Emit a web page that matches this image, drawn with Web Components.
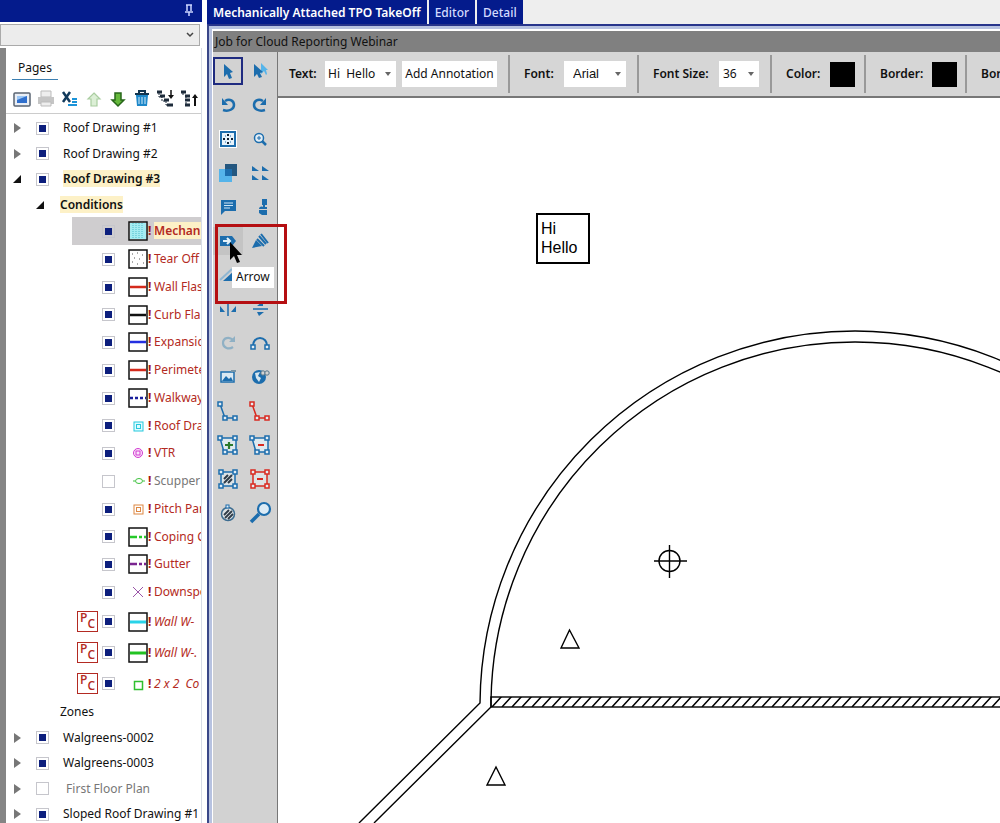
<!DOCTYPE html>
<html lang="en">
<head>
<meta charset="utf-8">
<title>Roof TakeOff</title>
<style>
  html, body { height: 100%; }
  body { margin: 0; overflow: hidden; background: #fff; font: 12px/18px "Noto Sans", "Open Sans", sans-serif; color: #111; }
</style>
</head>
<body>
<takeoff-app></takeoff-app>
<script>
const B = '#1c6dad', L = '#55b4ea', R = '#d92a20';
const node = (x, y, c) => `<rect x="${x}" y="${y}" width="4" height="4" fill="#e4edf4" stroke="${c}" stroke-width="1.5"/>`;
const poly = (c, inner) => `<path d="M5 6H21V20H9Z" fill="#dfe9ee" stroke="${c}" stroke-width="1.5"/>${node(3,4,c)}${node(18,4,c)}${node(18,18,c)}${node(8,18,c)}${inner}`;
const square = (c, inner) => `<rect x="6" y="6" width="14" height="14" fill="#dde3e6" stroke="${c}" stroke-width="1.5"/>${node(4,4,c)}${node(18,4,c)}${node(18,18,c)}${node(4,18,c)}${inner}`;
const path2 = c => `<path d="M5 6L10 20H20" fill="none" stroke="${c}" stroke-width="1.5"/>${node(3,4,c)}${node(8,18,c)}${node(18,18,c)}`;
const undo = `<path d="M10 9C15 6 19 9 19 13S14 20 8 18" fill="none" stroke="${B}" stroke-width="2.5"/><path d="M7 6V13H13Z" fill="${B}"/>`;
const boxed = inner => `<rect x="4" y="4" width="18" height="18" fill="#fff" stroke="#111" stroke-width="1.5"/>${inner}`;
const ICONS = {
  pin: `<path d="M10 7H16M11 7V13M15 7V13M9 14H17M13 14V18" fill="none" stroke="#cdd6ff" stroke-width="1.5"/>`,
  view: `<rect x="5" y="7" width="16" height="13" rx="1" fill="#e9eef5" stroke="#5a6472" stroke-width="1.5"/><rect x="8" y="10" width="10" height="7" fill="#2f6fcd"/><path d="M8 10H18L8 14Z" fill="#9cc7f5"/>`,
  print: `<path d="M8 5H18V11H8Z" fill="#eee" stroke="#bbb"/><path d="M5 11H21V18H5Z" fill="#c5c5c5"/><path d="M8 16H18V20H8Z" fill="#eee" stroke="#bbb"/>`,
  excel: `<path d="M6 6L13 16M13 6L6 16" stroke="#123a5c" stroke-width="2.5"/><path d="M15 13H20M15 16H20M11 19H20" stroke="#1b93d8" stroke-width="2"/>`,
  up: `<path d="M13 7L19 13H16V20H10V13H7Z" fill="#dcefd6" stroke="#a9cda0" stroke-width="1.2"/>`,
  down: `<path d="M13 20L19 14H16V7H10V14H7Z" fill="#66b93c" stroke="#27661a" stroke-width="1.5"/>`,
  trash: `<path d="M7 9H19L18 20H8Z" fill="#1e88c9"/><path d="M10 11V18M13 11V18M16 11V18" stroke="#d5ecfa"/><path d="M6 8H20M10 7V5H16V7" fill="none" stroke="#12354f" stroke-width="2"/>`,
  expand: `<path d="M4 6H9M7 10H12M11 14H16M14 19H20" stroke="#1d2b3a" stroke-width="3"/><path d="M6 7V11H9V15H13V19H17" fill="none" stroke="#1d2b3a" stroke-dasharray="2 1"/><path d="M18 4V11" stroke="#111" stroke-width="1.5"/><path d="M15 9H21L18 13Z" fill="#111"/>`,
  collapse: `<path d="M4 6H9M8 10H13M8 14H13M8 19H13" stroke="#1d2b3a" stroke-width="3"/><path d="M6 7V10M9 10V19" fill="none" stroke="#1d2b3a" stroke-dasharray="2 1"/><path d="M18 11V20" stroke="#111" stroke-width="2"/><path d="M15 12H21L18 8Z" fill="#111"/>`,
  cursor: `<path d="M9 6V19L12 16L14 21L17 20L15 15L18 14Z" fill="${B}"/>`,
  cursors: `<path d="M14 5V16L17 13L19 17L20 16L19 12H21Z" fill="${L}"/><path d="M7 6V19L10 16L12 20L15 19L13 15L16 14Z" fill="${B}"/>`,
  undo, redo: `<g transform="matrix(-1 0 0 1 26 0)">${undo}</g>`,
  grid: `<rect x="4" y="4" width="18" height="18" fill="#fff"/><rect x="6" y="6" width="14" height="14" fill="#e7f3fb" stroke="${B}" stroke-width="2"/><path d="M13 8V10M13 12V14M13 16V18M8 13H10M16 13H18" stroke="#123" stroke-width="2"/><path d="M10 10H11M15 10H16M10 16H11M15 16H16" stroke="${B}"/>`,
  zoom: `<circle cx="12" cy="12" r="4.5" fill="#e2edf5" stroke="${B}" stroke-width="1.5"/><path d="M15 15L19 19" stroke="${B}" stroke-width="2.5"/><path d="M10 12H14M12 10V14" stroke="${B}"/>`,
  layers: `<rect x="4" y="9" width="13" height="13" fill="${L}"/><rect x="10" y="4" width="12" height="12" fill="#24577f"/><rect x="10" y="9" width="7" height="7" fill="${B}"/>`,
  corners: ['5 6','15 6','5 15','15 15'].map(p => `<path d="M${p}L${+p.split(' ')[0] + 7} ${+p.split(' ')[1] + 5}H${p.split(' ')[0]}Z" fill="${B}"/>`).join(''),
  comment: `<path d="M6 6H21V17H10L6 21Z" fill="${B}"/><path d="M9 9H18M9 11.500H18M9 14H15" stroke="#cfe6f5"/>`,
  stamp: `<path d="M15 5H20V11H18V13H20V15H12C12 13 14 12 16 13V11H15Z" fill="${B}"/><path d="M12 16H20V21H15L12 19Z" fill="${B}"/>`,
  tag: `<path d="M5 8H17L21 13L17 18H5Z" fill="${B}"/><path d="M8 13H14M12 10L15 13L12 16" fill="none" stroke="#e5f2fa" stroke-width="2"/>`,
  marker: `<path d="M5 20L9 12L15 18Z" fill="${B}"/><path d="M10 11L17 18M12 8L19 16M14 6L21 15" stroke="${B}" stroke-width="2"/>`,
  slope: `<path d="M5 18L17 7" stroke="#8fb6d2" stroke-width="2"/><path d="M8 19L20 8V19Z" fill="${B}"/>`,
  flipx: `<path d="M5 10L10 16H5ZM21 10L16 16H21Z" fill="${B}"/><path d="M13 7V20" stroke="${B}" stroke-width="1.5"/>`,
  flipy: `<path d="M16 5V10H10ZM10 16H17L12 20Z" fill="${B}"/><path d="M6 13H21" stroke="${B}" stroke-width="1.5"/>`,
  again: `<path d="M18 10C14 6 8 8 8 13S14 20 18 17" fill="none" stroke="#8fb0c4" stroke-width="2.2"/><path d="M20 6V12H14Z" fill="#8fb0c4"/>`,
  arc: `<path d="M6 17C5 5 21 5 20 17" fill="none" stroke="${B}" stroke-width="2"/>${node(4,15,B)}${node(18,15,B)}`,
  image: `<rect x="6" y="8" width="13" height="10" fill="#dbe9f2" stroke="${B}" stroke-width="1.5"/><path d="M7 17L11 12L14 15L16 13L18 17Z" fill="${B}"/><path d="M16 7H21" stroke="#7795a8" stroke-width="2"/>`,
  globe: `<circle cx="12" cy="13" r="7" fill="${B}"/><path d="M8 9L13 8L11 12L14 14L12 18L9 14Z" fill="#d6e6ef"/><circle cx="16" cy="9" r="2.2" fill="#d2d2d2" stroke="#55758a"/><circle cx="20" cy="9" r="2.2" fill="#d2d2d2" stroke="#55758a"/>`,
  path: path2(B), pathdel: path2(R),
  polyadd: poly(B, `<path d="M14 10V17M10 13H18" stroke="#2b7a2b" stroke-width="2.2"/>`),
  polysub: poly(B, `<path d="M11 13H17" stroke="${R}" stroke-width="2"/>`),
  hatch: square(B, `<path d="M9 13L13 9M9 17L17 9M13 17L17 13" stroke="#2f3c48" stroke-width="2"/>`),
  cut: square(R, `<path d="M10 13H16" stroke="${R}" stroke-width="2"/>`),
  hatchround: `<circle cx="13" cy="14" r="6.500" fill="#dde3e6" stroke="#3c6c90" stroke-width="1.5"/><path d="M9 15L14 10M10 18L17 11M13 19L18 14" stroke="#2f3c48" stroke-width="1.8"/><rect x="11" y="5" width="3" height="3" fill="#e4edf4" stroke="${B}"/>`,
  find: `<circle cx="17" cy="9" r="6" fill="#dcebf5" stroke="${B}" stroke-width="2.200"/><path d="M12 14L4 22" stroke="${B}" stroke-width="3.500"/>`,
  'fill-cyan': boxed(`<rect x="5" y="5" width="16" height="16" fill="#a5ecf2"/><path d="M8 5V21M11 5V21M14 5V21M17 5V21" stroke="#4cbccb" stroke-dasharray="1 1"/>`),
  dots: boxed(`<path d="M7 8H8M12 7H13M17 9H18M9 12H10M14 13H15M7 16H8M12 18H13M18 17H19" stroke="#555"/>`),
  red: boxed(`<path d="M5 13H21" stroke="#d42a1c" stroke-width="2.500"/>`),
  black: boxed(`<path d="M5 13H21" stroke="#111" stroke-width="2.500"/>`),
  blue: boxed(`<path d="M5 13H21" stroke="#2430e0" stroke-width="2.500"/>`),
  walk: boxed(`<path d="M5 13H21" stroke="#1a1f9c" stroke-width="2.500" stroke-dasharray="3 2"/>`),
  coping: boxed(`<path d="M5 13H21" stroke="#26c92a" stroke-width="2.500" stroke-dasharray="7 2 3 2"/>`),
  gutter: boxed(`<path d="M5 13H21" stroke="#7a2590" stroke-width="2.500" stroke-dasharray="7 2 3 2"/>`),
  cyan: boxed(`<path d="M5 13H21" stroke="#29d3e8" stroke-width="3"/>`),
  green: boxed(`<path d="M5 13H21" stroke="#22c322" stroke-width="3"/>`),
  drain: `<rect x="9" y="9" width="9" height="9" fill="#e0fbff" stroke="#25c9dd"/><rect x="11.500" y="11.500" width="4" height="4" fill="none" stroke="#25c9dd"/>`,
  vtr: `<circle cx="13" cy="13" r="4.500" fill="#fbe4fb" stroke="#d13ad1"/><rect x="11" y="11" width="4" height="4" fill="none" stroke="#d13ad1"/>`,
  scupper: `<ellipse cx="14" cy="13" rx="3.500" ry="2.500" fill="none" stroke="#3ec13e"/><path d="M8 13H10M18 13H20" stroke="#3ec13e"/>`,
  pan: `<rect x="9" y="9" width="9" height="9" fill="#fff" stroke="#dd8742"/><rect x="11.500" y="11.500" width="4" height="4" fill="none" stroke="#dd8742"/>`,
  cross: `<path d="M8 8L18 18M18 8L8 18" stroke="#9a55a8"/>`,
  box: `<rect x="9.500" y="10.500" width="8" height="8" fill="#fff" stroke="#2fc02f" stroke-width="1.500"/>`
};

function define(name, html, setup) {
  const template = document.createElement('template');
  template.innerHTML = html;
  customElements.define(name, class extends HTMLElement {
    connectedCallback() {
      if (this.shadowRoot) return;
      const root = this.attachShadow({ mode: 'open' });
      root.append(template.content.cloneNode(true));
      if (setup) setup(this, root);
    }
  });
}

define('ui-icon', `<style>:host{display:block;flex:none;width:26px;height:26px}svg{display:block}</style>
<svg width="26" height="26" viewBox="0 0 26 26" aria-hidden="true"></svg>`,
(host, root) => { root.querySelector('svg').innerHTML = ICONS[host.getAttribute('name')] || ''; });

define('tree-row', `<style>
:host{display:flex;align-items:center;height:25px;white-space:nowrap;overflow:hidden;padding-left:7px}
:host(:nth-of-type(odd)){height:26px}
:host([level="2"]){padding-left:30px}
:host([level="3"]),:host([level="3"]:nth-of-type(odd)){height:28px;padding-left:30px;margin-left:66px;color:#b32a22}
:host([level="3"]:nth-of-type(4n)){height:27px}
:host([pc][level="3"]),:host([pc][level="3"]:nth-of-type(odd)){height:31px;padding-left:5px;font-style:italic}
:host([selected]){background:#cfcdcf}
.exp{all:unset;display:flex;justify-content:center;width:8px;height:10px;margin-right:15px;flex:none}
:host([level="2"]) .exp{margin-right:16px}
.exp svg{width:8px;height:10px}
input{appearance:none;box-sizing:border-box;width:13px;height:13px;margin:0;padding:2px;border:1px solid #c6c6cc;background:#fff;flex:none}
input:checked{background:#0d1f7d content-box}
label{display:flex;align-items:center;flex:none}
.name{margin-left:14px}
:host([level="2"]) .name{margin-left:0}
:host([level="3"]) .name{margin-left:1px}
ui-icon{margin:0 -3px 0 10px}
.bang{font-weight:700;font-style:normal;width:5px;color:#a31515}
:host([strong]) .name{font-weight:600}
:host([strong]) .name span{background:#fdf1c7}
:host([off]) .name{color:#777}
.pc{box-sizing:border-box;display:flex;flex:none;justify-content:center;width:21px;height:21px;margin-right:4px;border:1px solid #b32a22;font:600 12px/12px "Open Sans",sans-serif;color:#b32a22}
.pc b{font-weight:600}
.pc b+b{padding-top:6px}
</style>
<button class="exp" aria-label="Toggle"><svg viewBox="0 0 8 10"></svg></button>
<span class="pc"><b>P</b><b>C</b></span>
<label><input type="checkbox"><span class="bang">!</span><span class="name"><span><slot></slot></span></span></label>`,
(host, root) => {
  const $ = s => root.querySelector(s), level = host.getAttribute('level');
  const exp = host.getAttribute('exp');
  if (exp) $('.exp svg').innerHTML = exp === 'open' ? '<path d="M8 1V9H0Z" fill="#111"/>' : '<path d="M1 0L8 5L1 10Z" fill="#777"/>';
  else if (level === '3') $('.exp').remove();
  if (!host.hasAttribute('pc')) $('.pc').remove();
  $('input').checked = !host.hasAttribute('off');
  if (host.hasAttribute('icon')) $('input').insertAdjacentHTML('afterend', `<ui-icon name="${host.getAttribute('icon')}"></ui-icon>`);
  else $('.bang').remove();
  if (level === '2') $('input').remove();
});

define('side-panel', `<style>
:host{display:flex;flex-direction:column;width:202px;flex:none;overflow:hidden}
header{display:flex;justify-content:flex-end;align-items:center;height:22px;flex:none;background:#041b8c}
.pick{appearance:none;display:block;flex:none;width:200px;height:22px;margin:2px 0;border:1px solid #aaa;background:#ececec url("data:image/svg+xml,%3Csvg xmlns='http://www.w3.org/2000/svg' width='8' height='6'%3E%3Cpath d='M1 1L4 4L7 1' fill='none' stroke='%23444' stroke-width='1.5'/%3E%3C/svg%3E") no-repeat right 5px center;border-radius:0}
.body{flex:1;min-height:0;border-left:6px solid #858585;border-right:1px solid #d8dce6;display:flex;flex-direction:column}
h2{align-self:flex-start;flex:none;margin:11px 0 0 6px;padding:0 6px;height:20px;font:inherit;border-bottom:1px solid #3c7fb1}
.bar{display:flex;flex:none;gap:2px;box-sizing:border-box;height:34px;align-items:center;padding:5px 0 0 5px;border-bottom:1px solid #ccc}
.bar button{all:unset;display:flex;justify-content:center;width:22px}
.tree{padding-top:1px}
</style>
<header><ui-icon name="pin"></ui-icon></header>
<select class="pick" aria-label="View"><option></option></select>
<div class="body"><h2>Pages</h2><div class="bar"></div>
<div class="tree">
<div><tree-row exp="closed">Roof Drawing #1</tree-row><tree-row exp="closed">Roof Drawing #2</tree-row><tree-row exp="open" strong>Roof Drawing #3</tree-row><tree-row level="2" exp="open" strong>Conditions</tree-row></div>
<div><tree-row level="3" icon="fill-cyan" selected strong>Mechan</tree-row><tree-row level="3" icon="dots">Tear Off</tree-row><tree-row level="3" icon="red">Wall Flas</tree-row><tree-row level="3" icon="black">Curb Fla</tree-row><tree-row level="3" icon="blue">Expansic</tree-row><tree-row level="3" icon="red">Perimete</tree-row><tree-row level="3" icon="walk">Walkway</tree-row><tree-row level="3" icon="drain">Roof Dra</tree-row><tree-row level="3" icon="vtr">VTR</tree-row><tree-row level="3" icon="scupper" off>Scupper</tree-row><tree-row level="3" icon="pan">Pitch Par</tree-row><tree-row level="3" icon="coping">Coping C</tree-row><tree-row level="3" icon="gutter">Gutter</tree-row><tree-row level="3" icon="cross">Downspo</tree-row></div>
<div><tree-row level="3" pc icon="cyan">Wall W-</tree-row><tree-row level="3" pc icon="green">Wall W-.</tree-row><tree-row level="3" pc icon="box">2 x 2&nbsp; Co</tree-row></div>
<div><tree-row level="2">Zones</tree-row><tree-row exp="closed">Walgreens-0002</tree-row><tree-row exp="closed">Walgreens-0003</tree-row><tree-row exp="closed" off>&nbsp;First Floor Plan</tree-row><tree-row exp="closed">Sloped Roof Drawing #1</tree-row></div>
</div></div>`,
(host, root) => {
  root.querySelector('.bar').innerHTML = ['view','print','excel','up','down','trash','expand','collapse']
    .map(n => `<button aria-label="${n}"><ui-icon name="${n}"></ui-icon></button>`).join('');
});

define('view-tabs', `<style>
:host{display:flex;gap:2px;height:24px;background:#eee}
button{all:unset;box-sizing:border-box;height:24px;padding:0 6px;background:#041b8c;color:#d5dbff;line-height:25px;font-weight:500}
.on{color:#fff;font-weight:600}
</style><button class="on">Mechanically Attached TPO TakeOff</button><button>Editor</button><button>Detail</button>`);

define('tool-palette', `<style>
:host{display:block;position:relative;width:64px;flex:none;background:#d2d2d2;border-right:1px solid #777}
.grid{display:grid;grid-template-columns:30px 30px;column-gap:2px;row-gap:6px;padding-top:5px}
button{all:unset;box-sizing:border-box;height:28px;display:flex;align-items:center;justify-content:center}
.on{border:2px solid #1f2b80}
.hover{background:#c4c4c4}
.mark{position:absolute;left:2px;top:172px;width:66px;height:74px;border:3px solid #b50f12;z-index:3}
.tip{position:absolute;left:19px;top:215px;padding:1px 4px 2px;background:#fff;z-index:2}
.ptr{position:absolute;left:16px;top:189px;z-index:4}
</style><div class="grid"></div>
<div class="tip" role="tooltip">Arrow</div><div class="mark"></div>
<svg class="ptr" width="14" height="24" viewBox="0 0 14 24"><path d="M1 1V19L5 15L8 22L11 21L8 14H13Z" fill="#000"/></svg>`,
(host, root) => {
  root.querySelector('.grid').innerHTML = ['cursor','cursors','undo','redo','grid','zoom','layers','corners','comment','stamp','tag','marker','slope','','flipx','flipy','again','arc','image','globe','path','pathdel','polyadd','polysub','hatch','cut','hatchround','find']
    .map(n => n ? `<button aria-label="${n}" class="${n === 'cursor' ? 'on' : n === 'tag' ? 'hover' : ''}"><ui-icon name="${n}"></ui-icon></button>` : '<span></span>').join('');
});

define('option-bar', `<style>
:host{display:flex;height:46px;align-items:center;box-sizing:border-box;padding-left:11px;background:#d6d6d6;border-bottom:2px solid #777;overflow:hidden;white-space:nowrap;color:#111}
label{font-weight:600;flex:none}
select{appearance:none;box-sizing:border-box;height:26px;border:0;border-radius:0;padding:0 0 0 3px;margin:0;font:inherit;color:#111;background:#fff url("data:image/svg+xml,%3Csvg xmlns='http://www.w3.org/2000/svg' width='6' height='4'%3E%3Cpath d='M0 0H6L3 4Z' fill='%23666'/%3E%3C/svg%3E") no-repeat right 5px center;flex:none}
button{all:unset;box-sizing:border-box;flex:none;text-align:center}
.add{height:26px;width:95px;background:#fff}
.sw{width:25px;height:25px;background:#000}
hr{width:2px;height:38px;margin:0;border:0;background:#999;flex:none}
#t{width:71px;margin:0 6px 0 9px}
#f{width:62px;padding-left:9px;margin-left:10px;font-family:"Liberation Sans",Arial,sans-serif;font-size:13px}
#s{width:40px;margin-left:9px;padding-left:4px}
.g{display:flex;align-items:center;flex:none;box-sizing:border-box;padding-left:14px}
.g label{width:var(--w)}
</style>
<div class="g" style="width:219px;padding:0;--w:27px"><label for="t">Text:</label><select id="t"><option>Hi&nbsp; Hello</option></select><button class="add">Add Annotation</button></div>
<hr><div class="g" style="width:127px;--w:30px"><label for="f">Font:</label><select id="f"><option>Arial</option></select></div>
<hr><div class="g" style="width:131px;--w:57px"><label for="s">Font Size:</label><select id="s"><option>36</option></select></div>
<hr><div class="g" style="width:92px;--w:44px"><label for="c">Color:</label><button id="c" class="sw" aria-label="Color"></button></div>
<hr><div class="g" style="width:99px;--w:52px"><label for="b">Border:</label><button id="b" class="sw" aria-label="Border"></button></div>
<hr><div class="g"><label>Bor</label></div>`);

define('drawing-canvas', `<style>
:host{display:block;position:relative;flex:1;min-height:0;overflow:hidden;background:#fff}
svg{position:absolute;left:0;top:0;width:100%;height:100%}
.note{position:absolute;left:258px;top:115px;box-sizing:border-box;width:54px;height:51px;border:2px solid #000;padding:4px 3px;font:16px/19px "Liberation Sans",Arial,sans-serif;color:#000}
</style>
<svg aria-label="Roof plan"><defs><pattern id="h" width="10" height="11" patternUnits="userSpaceOnUse" x="491" y="696"><path d="M1 11L11 0M-9 11L1 0" stroke="#000" stroke-width="1.500"/></pattern></defs>
<g transform="translate(-278 -98)" fill="none" stroke="#000" stroke-width="1.400">
<path d="M359 823L480 703A375 375 0 0 1 855 331A375 375 0 0 1 1230 703"/><path d="M374 823L491 707V700A364 364 0 0 1 855 342A364 364 0 0 1 1219 700"/>
<rect x="491" y="697" width="2000" height="10" fill="url(#h)"/>
<circle cx="669.500" cy="561" r="10.500"/><path d="M654 561H687M669.500 545V578"/>
<path d="M569.500 630L561 648H579ZM496 767L487 785H505Z"/></g></svg>
<div class="note">Hi<br>Hello</div>`);

define('takeoff-app', `<style>
:host{display:flex;height:100%;gap:5px;overflow:hidden}
main{flex:1;min-width:0;display:flex;flex-direction:column}
.frame{flex:1;min-height:0;display:flex;flex-direction:column;border-top:2px solid #27348b;border-left:2px solid #3a4788;box-shadow:inset 3px 3px #b7c2e0;padding:5px 0 0 4px}
h1{margin:0;height:21px;padding-left:2px;background:#808080;font:inherit;line-height:22px;color:#111}
.work{flex:1;min-height:0;display:flex}
.view{flex:1;min-width:0;display:flex;flex-direction:column}
</style><side-panel></side-panel>
<main><view-tabs></view-tabs><div class="frame"><h1>Job for Cloud Reporting Webinar</h1><div class="work"><tool-palette></tool-palette><div class="view"><option-bar></option-bar><drawing-canvas></drawing-canvas></div></div></div></main>`);
</script>
</body>
</html>
